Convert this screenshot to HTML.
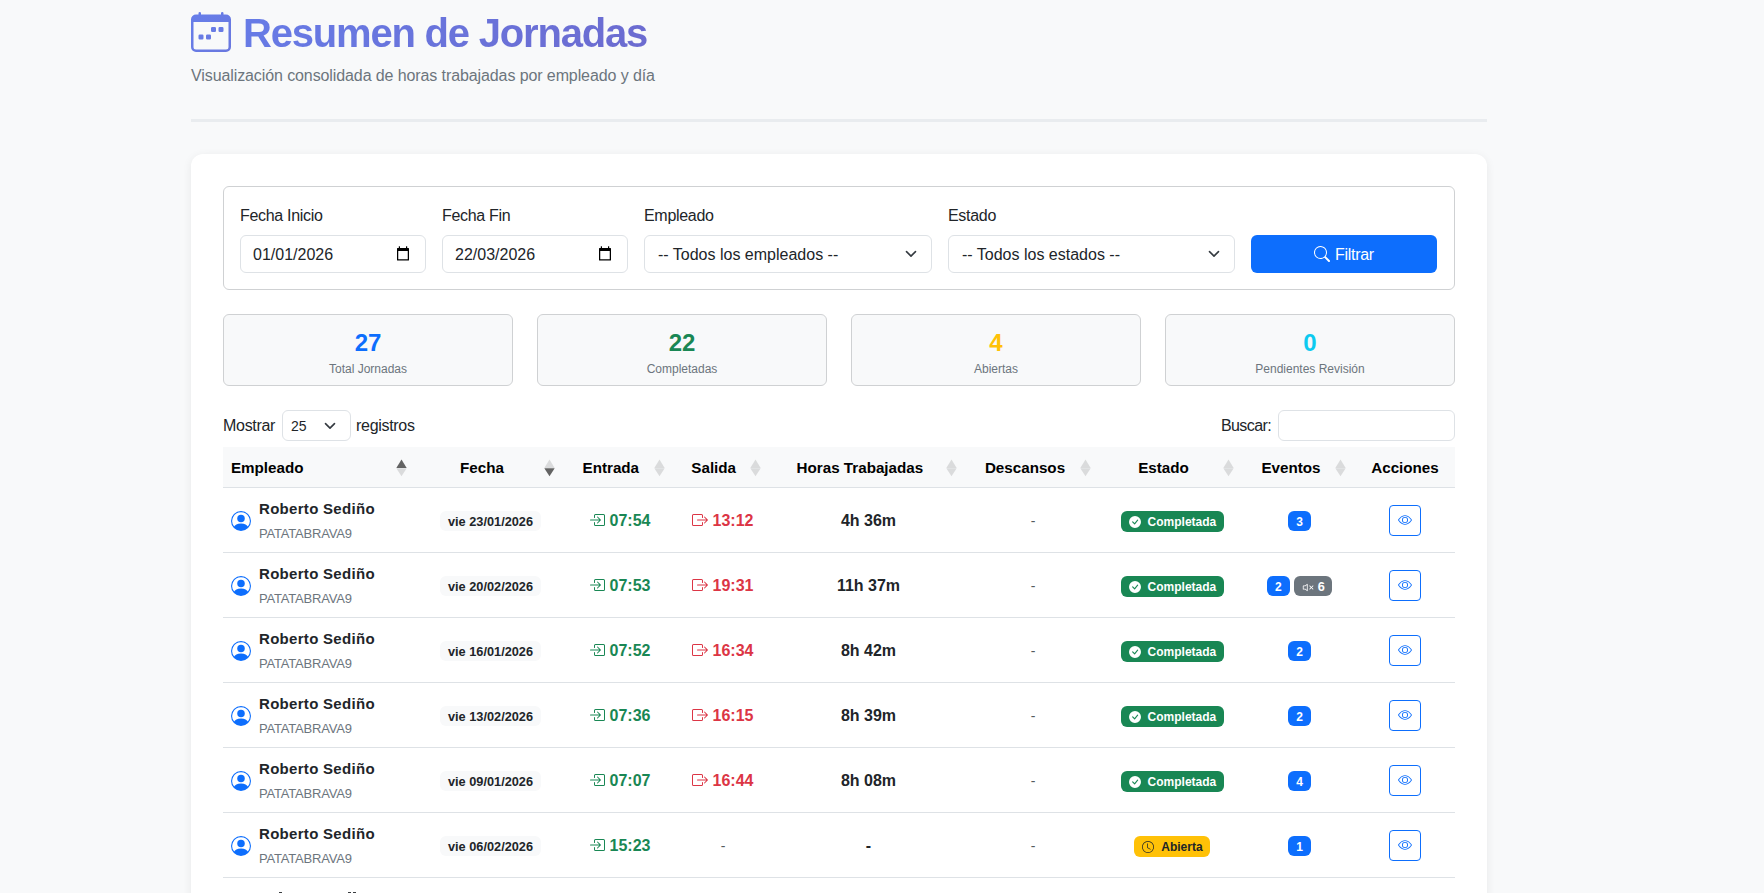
<!DOCTYPE html>
<html lang="es">
<head>
<meta charset="utf-8">
<title>Resumen de Jornadas</title>
<style>
*{box-sizing:border-box;margin:0;padding:0}
html,body{width:1764px;height:893px;overflow:hidden}
body{background:#f8f9fa;font-family:"Liberation Sans",sans-serif;color:#212529;font-size:16px;line-height:1.5;position:relative}
.abs{position:absolute}
svg{display:block}
/* header */
#hicon{left:191px;top:12px;width:40px;height:40px}
#title{left:243px;top:9px;font-size:40px;font-weight:700;line-height:48px;white-space:nowrap;letter-spacing:-1.2px;
 background:linear-gradient(135deg,#667eea 0%,#764ba2 100%);background-size:1296px 48px;background-position:-53px 0;-webkit-background-clip:text;background-clip:text;color:transparent}
#sub{left:191px;top:64px;color:#6c757d;font-size:16px;line-height:24px;white-space:nowrap;letter-spacing:-0.1px}
#hr{left:191px;top:119px;width:1296px;height:3px;background:#e9ecef}
/* card */
#card{left:191px;top:154px;width:1296px;height:800px;background:#fff;border-radius:12px;box-shadow:0 2px 10px rgba(0,0,0,.07)}
#filters{left:223px;top:186px;width:1232px;height:104px;border:1px solid #cfd1d3;border-radius:6px;background:#fff}
.lbl{font-size:16px;line-height:24px;white-space:nowrap;color:#212529;letter-spacing:-0.3px}
.inp{height:38px;border:1px solid #dee2e6;border-radius:6px;background:#fff;font-size:16px;line-height:36px;padding-top:1px;padding-left:12px;white-space:nowrap;color:#212529}
.btn{background:#0d6efd;border-radius:6px;color:#fff;height:38px}
/* stats */
.stat{top:314px;width:290px;height:72px;background:#f8f9fa;border:1px solid #cfd1d3;border-radius:6px;text-align:center}
.stat .n{position:absolute;left:0;right:0;top:10px;font-size:24px;font-weight:700;line-height:36px}
.stat .t{position:absolute;left:0;right:0;top:45px;font-size:12px;line-height:18px;color:#6c757d}
/* table */
#thead{left:223px;top:447px;width:1232px;height:41px;background:#f8f9fa;border-bottom:1px solid #dee2e6}
.th{position:absolute;top:0;height:40px;font-weight:700;font-size:15.2px;line-height:40px;white-space:nowrap;color:#000}
.row{position:absolute;left:223px;width:1232px;height:65px;border-bottom:1px solid #dee2e6}
.c{position:absolute;top:0;height:64px;display:flex;align-items:center;justify-content:center;white-space:nowrap}
.badge{display:inline-block;font-size:12px;font-weight:700;line-height:12px;padding:4px 8px;border-radius:6px;white-space:nowrap}
.nm{font-weight:700;font-size:15px;line-height:24px;white-space:nowrap;color:#212529;letter-spacing:0.3px}
.us{font-size:13px;line-height:20px;white-space:nowrap;color:#6c757d;letter-spacing:-0.2px}
.dt{background:#f8f9fa;color:#212529;font-size:12.75px;padding:4px 8px 4.4px;position:relative;top:1.3px}
.tm{display:inline-flex;align-items:center;font-weight:700;font-size:16px;line-height:24px}
.hr{font-weight:700;font-size:16px;line-height:24px;color:#212529;position:relative;top:1px}
.t1{position:relative;top:1px}
.dash{color:#555b61;font-size:14px;position:relative;top:1px}
.st{display:inline-flex;align-items:center;position:relative;top:1.4px;left:0.4px;padding:5.5px 7.8px 3.8px}
.ev{display:inline-flex;align-items:center;color:#fff;position:relative;top:1px;padding:5.2px 8.4px 3.2px}
.vbtn{display:inline-flex;align-items:center;justify-content:center;width:32px;height:31px;border:1px solid #0d6efd;border-radius:4px}
</style>
</head>
<body>
<!-- header -->
<svg id="hicon" class="abs" viewBox="0 0 16 16">
 <defs><linearGradient id="g1" x1="0" y1="0" x2="1" y2="1"><stop offset="0" stop-color="#667eea"/><stop offset="1" stop-color="#6a78df"/></linearGradient></defs>
 <g fill="url(#g1)">
 <path d="M11 6.5a.5.5 0 0 1 .5-.5h1a.5.5 0 0 1 .5.5v1a.5.5 0 0 1-.5.5h-1a.5.5 0 0 1-.5-.5zm-3 0a.5.5 0 0 1 .5-.5h1a.5.5 0 0 1 .5.5v1a.5.5 0 0 1-.5.5h-1a.5.5 0 0 1-.5-.5zm-5 3a.5.5 0 0 1 .5-.5h1a.5.5 0 0 1 .5.5v1a.5.5 0 0 1-.5.5h-1a.5.5 0 0 1-.5-.5zm3 0a.5.5 0 0 1 .5-.5h1a.5.5 0 0 1 .5.5v1a.5.5 0 0 1-.5.5h-1a.5.5 0 0 1-.5-.5z"/>
 <path d="M3.5 0a.5.5 0 0 1 .5.5V1h8V.5a.5.5 0 0 1 1 0V1h1a2 2 0 0 1 2 2v11a2 2 0 0 1-2 2H2a2 2 0 0 1-2-2V3a2 2 0 0 1 2-2h1V.5a.5.5 0 0 1 .5-.5M1 4v10a1 1 0 0 0 1 1h12a1 1 0 0 0 1-1V4z"/>
 </g>
</svg>
<div id="title" class="abs">Resumen de Jornadas</div>
<div id="sub" class="abs">Visualización consolidada de horas trabajadas por empleado y día</div>
<div id="hr" class="abs"></div>

<div id="card" class="abs"></div>
<div id="filters" class="abs"></div>

<!-- filters -->
<div class="abs lbl" style="left:240px;top:204px">Fecha Inicio</div>
<div class="abs lbl" style="left:442px;top:204px">Fecha Fin</div>
<div class="abs lbl" style="left:644px;top:204px">Empleado</div>
<div class="abs lbl" style="left:948px;top:204px">Estado</div>
<div class="abs inp" style="left:240px;top:235px;width:186px">01/01/2026</div>
<svg class="abs" style="left:396px;top:245px" width="14" height="17" viewBox="0 0 14 17"><path fill-rule="evenodd" fill="#000" d="M1.6 3H12.4A.6.6 0 0 1 13 3.6V14.9A.6.6 0 0 1 12.4 15.5H1.6A.6.6 0 0 1 1 14.9V3.6A.6.6 0 0 1 1.6 3ZM2.25 6V14.25H11.75V6Z"/><rect x="2.8" y="1.3" width="1.2" height="2" fill="#000"/><rect x="10" y="1.3" width="1.2" height="2" fill="#000"/></svg>
<div class="abs inp" style="left:442px;top:235px;width:186px">22/03/2026</div>
<svg class="abs" style="left:598px;top:245px" width="14" height="17" viewBox="0 0 14 17"><path fill-rule="evenodd" fill="#000" d="M1.6 3H12.4A.6.6 0 0 1 13 3.6V14.9A.6.6 0 0 1 12.4 15.5H1.6A.6.6 0 0 1 1 14.9V3.6A.6.6 0 0 1 1.6 3ZM2.25 6V14.25H11.75V6Z"/><rect x="2.8" y="1.3" width="1.2" height="2" fill="#000"/><rect x="10" y="1.3" width="1.2" height="2" fill="#000"/></svg>
<div class="abs inp" style="left:644px;top:235px;width:288px;padding-left:13px">-- Todos los empleados --</div>
<svg class="abs" style="left:903px;top:248px" width="16" height="12" viewBox="0 0 16 12"><path d="M3.5 3.6l4.5 4.5 4.5-4.5" fill="none" stroke="#343a40" stroke-width="1.6" stroke-linecap="round" stroke-linejoin="round"/></svg>
<div class="abs inp" style="left:948px;top:235px;width:287px;padding-left:13px">-- Todos los estados --</div>
<svg class="abs" style="left:1206px;top:248px" width="16" height="12" viewBox="0 0 16 12"><path d="M3.5 3.6l4.5 4.5 4.5-4.5" fill="none" stroke="#343a40" stroke-width="1.6" stroke-linecap="round" stroke-linejoin="round"/></svg>
<div class="abs btn" style="left:1251px;top:235px;width:186px"></div>
<svg class="abs" style="left:1314px;top:246px" width="16" height="16" viewBox="0 0 16 16" fill="#fff"><path d="M11.742 10.344a6.5 6.5 0 1 0-1.397 1.398h-.001q.044.06.098.115l3.85 3.85a1 1 0 0 0 1.415-1.414l-3.85-3.85a1 1 0 0 0-.115-.1zM12 6.5a5.5 5.5 0 1 1-11 0 5.5 5.5 0 0 1 11 0"/></svg>
<div class="abs lbl" style="left:1335px;top:243px;color:#fff">Filtrar</div>

<!-- stats -->
<div class="abs stat" style="left:223px"><div class="n" style="color:#0d6efd">27</div><div class="t">Total Jornadas</div></div>
<div class="abs stat" style="left:537px"><div class="n" style="color:#198754">22</div><div class="t">Completadas</div></div>
<div class="abs stat" style="left:851px"><div class="n" style="color:#ffc107">4</div><div class="t">Abiertas</div></div>
<div class="abs stat" style="left:1165px"><div class="n" style="color:#0dcaf0">0</div><div class="t">Pendientes Revisión</div></div>

<!-- table controls -->
<div class="abs lbl" style="left:223px;top:414px">Mostrar</div>
<div class="abs inp" style="left:282px;top:410px;width:69px;height:31px;line-height:29px;padding-left:8px;font-size:14px">25</div>
<svg class="abs" style="left:322px;top:420px" width="16" height="12" viewBox="0 0 16 12"><path d="M3.5 3.6l4.5 4.5 4.5-4.5" fill="none" stroke="#343a40" stroke-width="1.6" stroke-linecap="round" stroke-linejoin="round"/></svg>
<div class="abs lbl" style="left:356px;top:414px">registros</div>
<div class="abs lbl" style="left:1221px;top:414px;letter-spacing:-0.6px">Buscar:</div>
<div class="abs inp" style="left:1278px;top:410px;width:177px;height:31px"></div>
<!-- TABLE START -->
<div class="abs" id="thead"></div>
<div class="abs th" style="left:230.9px;top:448px">Empleado</div>
<div class="abs th" style="left:332.0px;width:300px;text-align:center;top:448px">Fecha</div>
<div class="abs th" style="left:460.8px;width:300px;text-align:center;top:448px">Entrada</div>
<div class="abs th" style="left:563.7px;width:300px;text-align:center;top:448px">Salida</div>
<div class="abs th" style="left:709.9px;width:300px;text-align:center;top:448px">Horas Trabajadas</div>
<div class="abs th" style="left:875.0px;width:300px;text-align:center;top:448px">Descansos</div>
<div class="abs th" style="left:1013.5px;width:300px;text-align:center;top:448px">Estado</div>
<div class="abs th" style="left:1141.0px;width:300px;text-align:center;top:448px">Eventos</div>
<div class="abs th" style="left:1255.0px;width:300px;text-align:center;top:448px">Acciones</div>
<svg class="abs" style="left:395.9px;top:459px" width="11" height="18" viewBox="0 0 11 18"><path d="M0.3 8.9L5.5 0.6L10.7 8.9Z" fill="#636363"/><path d="M0.3 9.3L10.7 9.3L5.5 17.2Z" fill="#dadbdc"/></svg>
<svg class="abs" style="left:544.0px;top:459px" width="11" height="18" viewBox="0 0 11 18"><path d="M0.3 8.9L5.5 0.6L10.7 8.9Z" fill="#dadbdc"/><path d="M0.3 9.3L10.7 9.3L5.5 17.2Z" fill="#636363"/></svg>
<svg class="abs" style="left:654.3px;top:459px" width="11" height="18" viewBox="0 0 11 18"><path d="M0.3 8.9L5.5 0.6L10.7 8.9Z" fill="#dadbdc"/><path d="M0.3 9.3L10.7 9.3L5.5 17.2Z" fill="#dadbdc"/></svg>
<svg class="abs" style="left:750.0px;top:459px" width="11" height="18" viewBox="0 0 11 18"><path d="M0.3 8.9L5.5 0.6L10.7 8.9Z" fill="#dadbdc"/><path d="M0.3 9.3L10.7 9.3L5.5 17.2Z" fill="#dadbdc"/></svg>
<svg class="abs" style="left:945.5px;top:459px" width="11" height="18" viewBox="0 0 11 18"><path d="M0.3 8.9L5.5 0.6L10.7 8.9Z" fill="#dadbdc"/><path d="M0.3 9.3L10.7 9.3L5.5 17.2Z" fill="#dadbdc"/></svg>
<svg class="abs" style="left:1079.9px;top:459px" width="11" height="18" viewBox="0 0 11 18"><path d="M0.3 8.9L5.5 0.6L10.7 8.9Z" fill="#dadbdc"/><path d="M0.3 9.3L10.7 9.3L5.5 17.2Z" fill="#dadbdc"/></svg>
<svg class="abs" style="left:1223.2px;top:459px" width="11" height="18" viewBox="0 0 11 18"><path d="M0.3 8.9L5.5 0.6L10.7 8.9Z" fill="#dadbdc"/><path d="M0.3 9.3L10.7 9.3L5.5 17.2Z" fill="#dadbdc"/></svg>
<svg class="abs" style="left:1334.5px;top:459px" width="11" height="18" viewBox="0 0 11 18"><path d="M0.3 8.9L5.5 0.6L10.7 8.9Z" fill="#dadbdc"/><path d="M0.3 9.3L10.7 9.3L5.5 17.2Z" fill="#dadbdc"/></svg>
<div class="row" style="top:488px"><div class="abs" style="left:7.800000000000011px;top:23px"><svg width="20" height="20" viewBox="0 0 16 16" fill="#0d6efd" style=""><path d="M11 6a3 3 0 1 1-6 0 3 3 0 0 1 6 0"/><path fill-rule="evenodd" d="M0 8a8 8 0 1 1 16 0A8 8 0 0 1 0 8m8-7a7 7 0 0 0-5.468 11.37C3.242 11.226 4.805 10 8 10s4.757 1.225 5.468 2.37A7 7 0 0 0 8 1"/></svg></div><div class="abs nm" style="left:36px;top:9px">Roberto Sediño</div><div class="abs us" style="left:36px;top:35.5px">PATATABRAVA9</div><div class="c" style="left:193px;width:149px;"><span class="badge dt"><span class="t1">vie 23/01/2026</span></span></div><div class="c" style="left:342px;width:110px;"><span class="tm" style="color:#198754"><svg width="16" height="16" viewBox="0 0 16 16" fill="#198754" style="margin-right:4px;position:relative;left:-1px"><path fill-rule="evenodd" d="M6 3.5a.5.5 0 0 1 .5-.5h8a.5.5 0 0 1 .5.5v9a.5.5 0 0 1-.5.5h-8a.5.5 0 0 1-.5-.5v-2a.5.5 0 0 0-1 0v2A1.5 1.5 0 0 0 6.5 14h8a1.5 1.5 0 0 0 1.5-1.5v-9A1.5 1.5 0 0 0 14.5 2h-8A1.5 1.5 0 0 0 5 3.5v2a.5.5 0 0 0 1 0z"/><path fill-rule="evenodd" d="M11.854 8.354a.5.5 0 0 0 0-.708l-3-3a.5.5 0 1 0-.708.708L10.293 7.5H1.5a.5.5 0 0 0 0 1h8.793l-2.147 2.146a.5.5 0 0 0 .708.708z"/></svg><span class="t1">07:54</span></span></div><div class="c" style="left:452px;width:96px;"><span class="tm" style="color:#dc3545"><svg width="16" height="16" viewBox="0 0 16 16" fill="#dc3545" style="margin-right:4px;position:relative;left:-1px"><path fill-rule="evenodd" d="M10 12.5a.5.5 0 0 1-.5.5h-8a.5.5 0 0 1-.5-.5v-9a.5.5 0 0 1 .5-.5h8a.5.5 0 0 1 .5.5v2a.5.5 0 0 0 1 0v-2A1.5 1.5 0 0 0 9.5 2h-8A1.5 1.5 0 0 0 0 3.5v9A1.5 1.5 0 0 0 1.5 14h8a1.5 1.5 0 0 0 1.5-1.5v-2a.5.5 0 0 0-1 0z"/><path fill-rule="evenodd" d="M15.854 8.354a.5.5 0 0 0 0-.708l-3-3a.5.5 0 0 0-.708.708L14.293 7.5H5.5a.5.5 0 0 0 0 1h8.793l-2.147 2.146a.5.5 0 0 0 .708.708z"/></svg><span class="t1">13:12</span></span></div><div class="c" style="left:548px;width:195px;"><span class="hr">4h 36m</span></div><div class="c" style="left:743px;width:134px;"><span class="dash">-</span></div><div class="c" style="left:877px;width:144px;"><span class="badge st" style="background:#198754;color:#fff"><svg width="12" height="12" viewBox="0 0 16 16" fill="#fff" style="margin-right:7px"><path d="M16 8A8 8 0 1 1 0 8a8 8 0 0 1 16 0m-3.97-3.03a.75.75 0 0 0-1.08.022L7.477 9.417 5.384 7.323a.75.75 0 0 0-1.06 1.06L6.97 11.03a.75.75 0 0 0 1.079-.02l3.992-4.99a.75.75 0 0 0-.01-1.05z"/></svg>Completada</span></div><div class="c" style="left:1021px;width:111px;"><span class="badge ev" style="background:#0d6efd">3</span></div><div class="c" style="left:1132px;width:100px;"><span class="vbtn"><svg width="14" height="14" viewBox="0 0 16 16" fill="#0d6efd" style=""><path d="M16 8s-3-5.5-8-5.5S0 8 0 8s3 5.5 8 5.5S16 8 16 8M1.173 8a13 13 0 0 1 1.66-2.043C4.12 4.668 5.88 3.5 8 3.5s3.879 1.168 5.168 2.457A13 13 0 0 1 14.828 8q-.086.13-.195.288c-.335.48-.83 1.12-1.465 1.755C11.879 11.332 10.119 12.5 8 12.5s-3.879-1.168-5.168-2.457A13 13 0 0 1 1.172 8z"/><path d="M8 5.5a2.5 2.5 0 1 0 0 5 2.5 2.5 0 0 0 0-5M4.5 8a3.5 3.5 0 1 1 7 0 3.5 3.5 0 0 1-7 0"/></svg></span></div></div>
<div class="row" style="top:553px"><div class="abs" style="left:7.800000000000011px;top:23px"><svg width="20" height="20" viewBox="0 0 16 16" fill="#0d6efd" style=""><path d="M11 6a3 3 0 1 1-6 0 3 3 0 0 1 6 0"/><path fill-rule="evenodd" d="M0 8a8 8 0 1 1 16 0A8 8 0 0 1 0 8m8-7a7 7 0 0 0-5.468 11.37C3.242 11.226 4.805 10 8 10s4.757 1.225 5.468 2.37A7 7 0 0 0 8 1"/></svg></div><div class="abs nm" style="left:36px;top:9px">Roberto Sediño</div><div class="abs us" style="left:36px;top:35.5px">PATATABRAVA9</div><div class="c" style="left:193px;width:149px;"><span class="badge dt"><span class="t1">vie 20/02/2026</span></span></div><div class="c" style="left:342px;width:110px;"><span class="tm" style="color:#198754"><svg width="16" height="16" viewBox="0 0 16 16" fill="#198754" style="margin-right:4px;position:relative;left:-1px"><path fill-rule="evenodd" d="M6 3.5a.5.5 0 0 1 .5-.5h8a.5.5 0 0 1 .5.5v9a.5.5 0 0 1-.5.5h-8a.5.5 0 0 1-.5-.5v-2a.5.5 0 0 0-1 0v2A1.5 1.5 0 0 0 6.5 14h8a1.5 1.5 0 0 0 1.5-1.5v-9A1.5 1.5 0 0 0 14.5 2h-8A1.5 1.5 0 0 0 5 3.5v2a.5.5 0 0 0 1 0z"/><path fill-rule="evenodd" d="M11.854 8.354a.5.5 0 0 0 0-.708l-3-3a.5.5 0 1 0-.708.708L10.293 7.5H1.5a.5.5 0 0 0 0 1h8.793l-2.147 2.146a.5.5 0 0 0 .708.708z"/></svg><span class="t1">07:53</span></span></div><div class="c" style="left:452px;width:96px;"><span class="tm" style="color:#dc3545"><svg width="16" height="16" viewBox="0 0 16 16" fill="#dc3545" style="margin-right:4px;position:relative;left:-1px"><path fill-rule="evenodd" d="M10 12.5a.5.5 0 0 1-.5.5h-8a.5.5 0 0 1-.5-.5v-9a.5.5 0 0 1 .5-.5h8a.5.5 0 0 1 .5.5v2a.5.5 0 0 0 1 0v-2A1.5 1.5 0 0 0 9.5 2h-8A1.5 1.5 0 0 0 0 3.5v9A1.5 1.5 0 0 0 1.5 14h8a1.5 1.5 0 0 0 1.5-1.5v-2a.5.5 0 0 0-1 0z"/><path fill-rule="evenodd" d="M15.854 8.354a.5.5 0 0 0 0-.708l-3-3a.5.5 0 0 0-.708.708L14.293 7.5H5.5a.5.5 0 0 0 0 1h8.793l-2.147 2.146a.5.5 0 0 0 .708.708z"/></svg><span class="t1">19:31</span></span></div><div class="c" style="left:548px;width:195px;"><span class="hr">11h 37m</span></div><div class="c" style="left:743px;width:134px;"><span class="dash">-</span></div><div class="c" style="left:877px;width:144px;"><span class="badge st" style="background:#198754;color:#fff"><svg width="12" height="12" viewBox="0 0 16 16" fill="#fff" style="margin-right:7px"><path d="M16 8A8 8 0 1 1 0 8a8 8 0 0 1 16 0m-3.97-3.03a.75.75 0 0 0-1.08.022L7.477 9.417 5.384 7.323a.75.75 0 0 0-1.06 1.06L6.97 11.03a.75.75 0 0 0 1.079-.02l3.992-4.99a.75.75 0 0 0-.01-1.05z"/></svg>Completada</span></div><div class="c" style="left:1021px;width:111px;"><span class="badge ev" style="background:#0d6efd">2</span><span class="badge ev" style="background:#6c757d;margin-left:4px;padding:5.2px 7.6px 3.2px 8px"><svg width="13" height="13" viewBox="0 0 16 16" fill="#fff" style="margin:-1px 2.6px -1px 0"><path d="M6.717 3.55A.5.5 0 0 1 7 4v8a.5.5 0 0 1-.812.39L3.825 10.5H1.5A.5.5 0 0 1 1 10V6a.5.5 0 0 1 .5-.5h2.325l2.363-1.89a.5.5 0 0 1 .529-.06M6 5.04 4.312 6.39A.5.5 0 0 1 4 6.5H2v3h2a.5.5 0 0 1 .312.11L6 10.96zm7.854.606a.5.5 0 0 1 0 .708L12.207 8l1.647 1.646a.5.5 0 0 1-.708.708L11.5 8.707l-1.646 1.647a.5.5 0 0 1-.708-.708L10.793 8 9.146 6.354a.5.5 0 1 1 .708-.708L11.5 7.293l1.646-1.647a.5.5 0 0 1 .708 0"/></svg><span style="font-size:12.75px">6</span></span></div><div class="c" style="left:1132px;width:100px;"><span class="vbtn"><svg width="14" height="14" viewBox="0 0 16 16" fill="#0d6efd" style=""><path d="M16 8s-3-5.5-8-5.5S0 8 0 8s3 5.5 8 5.5S16 8 16 8M1.173 8a13 13 0 0 1 1.66-2.043C4.12 4.668 5.88 3.5 8 3.5s3.879 1.168 5.168 2.457A13 13 0 0 1 14.828 8q-.086.13-.195.288c-.335.48-.83 1.12-1.465 1.755C11.879 11.332 10.119 12.5 8 12.5s-3.879-1.168-5.168-2.457A13 13 0 0 1 1.172 8z"/><path d="M8 5.5a2.5 2.5 0 1 0 0 5 2.5 2.5 0 0 0 0-5M4.5 8a3.5 3.5 0 1 1 7 0 3.5 3.5 0 0 1-7 0"/></svg></span></div></div>
<div class="row" style="top:618px"><div class="abs" style="left:7.800000000000011px;top:23px"><svg width="20" height="20" viewBox="0 0 16 16" fill="#0d6efd" style=""><path d="M11 6a3 3 0 1 1-6 0 3 3 0 0 1 6 0"/><path fill-rule="evenodd" d="M0 8a8 8 0 1 1 16 0A8 8 0 0 1 0 8m8-7a7 7 0 0 0-5.468 11.37C3.242 11.226 4.805 10 8 10s4.757 1.225 5.468 2.37A7 7 0 0 0 8 1"/></svg></div><div class="abs nm" style="left:36px;top:9px">Roberto Sediño</div><div class="abs us" style="left:36px;top:35.5px">PATATABRAVA9</div><div class="c" style="left:193px;width:149px;"><span class="badge dt"><span class="t1">vie 16/01/2026</span></span></div><div class="c" style="left:342px;width:110px;"><span class="tm" style="color:#198754"><svg width="16" height="16" viewBox="0 0 16 16" fill="#198754" style="margin-right:4px;position:relative;left:-1px"><path fill-rule="evenodd" d="M6 3.5a.5.5 0 0 1 .5-.5h8a.5.5 0 0 1 .5.5v9a.5.5 0 0 1-.5.5h-8a.5.5 0 0 1-.5-.5v-2a.5.5 0 0 0-1 0v2A1.5 1.5 0 0 0 6.5 14h8a1.5 1.5 0 0 0 1.5-1.5v-9A1.5 1.5 0 0 0 14.5 2h-8A1.5 1.5 0 0 0 5 3.5v2a.5.5 0 0 0 1 0z"/><path fill-rule="evenodd" d="M11.854 8.354a.5.5 0 0 0 0-.708l-3-3a.5.5 0 1 0-.708.708L10.293 7.5H1.5a.5.5 0 0 0 0 1h8.793l-2.147 2.146a.5.5 0 0 0 .708.708z"/></svg><span class="t1">07:52</span></span></div><div class="c" style="left:452px;width:96px;"><span class="tm" style="color:#dc3545"><svg width="16" height="16" viewBox="0 0 16 16" fill="#dc3545" style="margin-right:4px;position:relative;left:-1px"><path fill-rule="evenodd" d="M10 12.5a.5.5 0 0 1-.5.5h-8a.5.5 0 0 1-.5-.5v-9a.5.5 0 0 1 .5-.5h8a.5.5 0 0 1 .5.5v2a.5.5 0 0 0 1 0v-2A1.5 1.5 0 0 0 9.5 2h-8A1.5 1.5 0 0 0 0 3.5v9A1.5 1.5 0 0 0 1.5 14h8a1.5 1.5 0 0 0 1.5-1.5v-2a.5.5 0 0 0-1 0z"/><path fill-rule="evenodd" d="M15.854 8.354a.5.5 0 0 0 0-.708l-3-3a.5.5 0 0 0-.708.708L14.293 7.5H5.5a.5.5 0 0 0 0 1h8.793l-2.147 2.146a.5.5 0 0 0 .708.708z"/></svg><span class="t1">16:34</span></span></div><div class="c" style="left:548px;width:195px;"><span class="hr">8h 42m</span></div><div class="c" style="left:743px;width:134px;"><span class="dash">-</span></div><div class="c" style="left:877px;width:144px;"><span class="badge st" style="background:#198754;color:#fff"><svg width="12" height="12" viewBox="0 0 16 16" fill="#fff" style="margin-right:7px"><path d="M16 8A8 8 0 1 1 0 8a8 8 0 0 1 16 0m-3.97-3.03a.75.75 0 0 0-1.08.022L7.477 9.417 5.384 7.323a.75.75 0 0 0-1.06 1.06L6.97 11.03a.75.75 0 0 0 1.079-.02l3.992-4.99a.75.75 0 0 0-.01-1.05z"/></svg>Completada</span></div><div class="c" style="left:1021px;width:111px;"><span class="badge ev" style="background:#0d6efd">2</span></div><div class="c" style="left:1132px;width:100px;"><span class="vbtn"><svg width="14" height="14" viewBox="0 0 16 16" fill="#0d6efd" style=""><path d="M16 8s-3-5.5-8-5.5S0 8 0 8s3 5.5 8 5.5S16 8 16 8M1.173 8a13 13 0 0 1 1.66-2.043C4.12 4.668 5.88 3.5 8 3.5s3.879 1.168 5.168 2.457A13 13 0 0 1 14.828 8q-.086.13-.195.288c-.335.48-.83 1.12-1.465 1.755C11.879 11.332 10.119 12.5 8 12.5s-3.879-1.168-5.168-2.457A13 13 0 0 1 1.172 8z"/><path d="M8 5.5a2.5 2.5 0 1 0 0 5 2.5 2.5 0 0 0 0-5M4.5 8a3.5 3.5 0 1 1 7 0 3.5 3.5 0 0 1-7 0"/></svg></span></div></div>
<div class="row" style="top:683px"><div class="abs" style="left:7.800000000000011px;top:23px"><svg width="20" height="20" viewBox="0 0 16 16" fill="#0d6efd" style=""><path d="M11 6a3 3 0 1 1-6 0 3 3 0 0 1 6 0"/><path fill-rule="evenodd" d="M0 8a8 8 0 1 1 16 0A8 8 0 0 1 0 8m8-7a7 7 0 0 0-5.468 11.37C3.242 11.226 4.805 10 8 10s4.757 1.225 5.468 2.37A7 7 0 0 0 8 1"/></svg></div><div class="abs nm" style="left:36px;top:9px">Roberto Sediño</div><div class="abs us" style="left:36px;top:35.5px">PATATABRAVA9</div><div class="c" style="left:193px;width:149px;"><span class="badge dt"><span class="t1">vie 13/02/2026</span></span></div><div class="c" style="left:342px;width:110px;"><span class="tm" style="color:#198754"><svg width="16" height="16" viewBox="0 0 16 16" fill="#198754" style="margin-right:4px;position:relative;left:-1px"><path fill-rule="evenodd" d="M6 3.5a.5.5 0 0 1 .5-.5h8a.5.5 0 0 1 .5.5v9a.5.5 0 0 1-.5.5h-8a.5.5 0 0 1-.5-.5v-2a.5.5 0 0 0-1 0v2A1.5 1.5 0 0 0 6.5 14h8a1.5 1.5 0 0 0 1.5-1.5v-9A1.5 1.5 0 0 0 14.5 2h-8A1.5 1.5 0 0 0 5 3.5v2a.5.5 0 0 0 1 0z"/><path fill-rule="evenodd" d="M11.854 8.354a.5.5 0 0 0 0-.708l-3-3a.5.5 0 1 0-.708.708L10.293 7.5H1.5a.5.5 0 0 0 0 1h8.793l-2.147 2.146a.5.5 0 0 0 .708.708z"/></svg><span class="t1">07:36</span></span></div><div class="c" style="left:452px;width:96px;"><span class="tm" style="color:#dc3545"><svg width="16" height="16" viewBox="0 0 16 16" fill="#dc3545" style="margin-right:4px;position:relative;left:-1px"><path fill-rule="evenodd" d="M10 12.5a.5.5 0 0 1-.5.5h-8a.5.5 0 0 1-.5-.5v-9a.5.5 0 0 1 .5-.5h8a.5.5 0 0 1 .5.5v2a.5.5 0 0 0 1 0v-2A1.5 1.5 0 0 0 9.5 2h-8A1.5 1.5 0 0 0 0 3.5v9A1.5 1.5 0 0 0 1.5 14h8a1.5 1.5 0 0 0 1.5-1.5v-2a.5.5 0 0 0-1 0z"/><path fill-rule="evenodd" d="M15.854 8.354a.5.5 0 0 0 0-.708l-3-3a.5.5 0 0 0-.708.708L14.293 7.5H5.5a.5.5 0 0 0 0 1h8.793l-2.147 2.146a.5.5 0 0 0 .708.708z"/></svg><span class="t1">16:15</span></span></div><div class="c" style="left:548px;width:195px;"><span class="hr">8h 39m</span></div><div class="c" style="left:743px;width:134px;"><span class="dash">-</span></div><div class="c" style="left:877px;width:144px;"><span class="badge st" style="background:#198754;color:#fff"><svg width="12" height="12" viewBox="0 0 16 16" fill="#fff" style="margin-right:7px"><path d="M16 8A8 8 0 1 1 0 8a8 8 0 0 1 16 0m-3.97-3.03a.75.75 0 0 0-1.08.022L7.477 9.417 5.384 7.323a.75.75 0 0 0-1.06 1.06L6.97 11.03a.75.75 0 0 0 1.079-.02l3.992-4.99a.75.75 0 0 0-.01-1.05z"/></svg>Completada</span></div><div class="c" style="left:1021px;width:111px;"><span class="badge ev" style="background:#0d6efd">2</span></div><div class="c" style="left:1132px;width:100px;"><span class="vbtn"><svg width="14" height="14" viewBox="0 0 16 16" fill="#0d6efd" style=""><path d="M16 8s-3-5.5-8-5.5S0 8 0 8s3 5.5 8 5.5S16 8 16 8M1.173 8a13 13 0 0 1 1.66-2.043C4.12 4.668 5.88 3.5 8 3.5s3.879 1.168 5.168 2.457A13 13 0 0 1 14.828 8q-.086.13-.195.288c-.335.48-.83 1.12-1.465 1.755C11.879 11.332 10.119 12.5 8 12.5s-3.879-1.168-5.168-2.457A13 13 0 0 1 1.172 8z"/><path d="M8 5.5a2.5 2.5 0 1 0 0 5 2.5 2.5 0 0 0 0-5M4.5 8a3.5 3.5 0 1 1 7 0 3.5 3.5 0 0 1-7 0"/></svg></span></div></div>
<div class="row" style="top:748px"><div class="abs" style="left:7.800000000000011px;top:23px"><svg width="20" height="20" viewBox="0 0 16 16" fill="#0d6efd" style=""><path d="M11 6a3 3 0 1 1-6 0 3 3 0 0 1 6 0"/><path fill-rule="evenodd" d="M0 8a8 8 0 1 1 16 0A8 8 0 0 1 0 8m8-7a7 7 0 0 0-5.468 11.37C3.242 11.226 4.805 10 8 10s4.757 1.225 5.468 2.37A7 7 0 0 0 8 1"/></svg></div><div class="abs nm" style="left:36px;top:9px">Roberto Sediño</div><div class="abs us" style="left:36px;top:35.5px">PATATABRAVA9</div><div class="c" style="left:193px;width:149px;"><span class="badge dt"><span class="t1">vie 09/01/2026</span></span></div><div class="c" style="left:342px;width:110px;"><span class="tm" style="color:#198754"><svg width="16" height="16" viewBox="0 0 16 16" fill="#198754" style="margin-right:4px;position:relative;left:-1px"><path fill-rule="evenodd" d="M6 3.5a.5.5 0 0 1 .5-.5h8a.5.5 0 0 1 .5.5v9a.5.5 0 0 1-.5.5h-8a.5.5 0 0 1-.5-.5v-2a.5.5 0 0 0-1 0v2A1.5 1.5 0 0 0 6.5 14h8a1.5 1.5 0 0 0 1.5-1.5v-9A1.5 1.5 0 0 0 14.5 2h-8A1.5 1.5 0 0 0 5 3.5v2a.5.5 0 0 0 1 0z"/><path fill-rule="evenodd" d="M11.854 8.354a.5.5 0 0 0 0-.708l-3-3a.5.5 0 1 0-.708.708L10.293 7.5H1.5a.5.5 0 0 0 0 1h8.793l-2.147 2.146a.5.5 0 0 0 .708.708z"/></svg><span class="t1">07:07</span></span></div><div class="c" style="left:452px;width:96px;"><span class="tm" style="color:#dc3545"><svg width="16" height="16" viewBox="0 0 16 16" fill="#dc3545" style="margin-right:4px;position:relative;left:-1px"><path fill-rule="evenodd" d="M10 12.5a.5.5 0 0 1-.5.5h-8a.5.5 0 0 1-.5-.5v-9a.5.5 0 0 1 .5-.5h8a.5.5 0 0 1 .5.5v2a.5.5 0 0 0 1 0v-2A1.5 1.5 0 0 0 9.5 2h-8A1.5 1.5 0 0 0 0 3.5v9A1.5 1.5 0 0 0 1.5 14h8a1.5 1.5 0 0 0 1.5-1.5v-2a.5.5 0 0 0-1 0z"/><path fill-rule="evenodd" d="M15.854 8.354a.5.5 0 0 0 0-.708l-3-3a.5.5 0 0 0-.708.708L14.293 7.5H5.5a.5.5 0 0 0 0 1h8.793l-2.147 2.146a.5.5 0 0 0 .708.708z"/></svg><span class="t1">16:44</span></span></div><div class="c" style="left:548px;width:195px;"><span class="hr">8h 08m</span></div><div class="c" style="left:743px;width:134px;"><span class="dash">-</span></div><div class="c" style="left:877px;width:144px;"><span class="badge st" style="background:#198754;color:#fff"><svg width="12" height="12" viewBox="0 0 16 16" fill="#fff" style="margin-right:7px"><path d="M16 8A8 8 0 1 1 0 8a8 8 0 0 1 16 0m-3.97-3.03a.75.75 0 0 0-1.08.022L7.477 9.417 5.384 7.323a.75.75 0 0 0-1.06 1.06L6.97 11.03a.75.75 0 0 0 1.079-.02l3.992-4.99a.75.75 0 0 0-.01-1.05z"/></svg>Completada</span></div><div class="c" style="left:1021px;width:111px;"><span class="badge ev" style="background:#0d6efd">4</span></div><div class="c" style="left:1132px;width:100px;"><span class="vbtn"><svg width="14" height="14" viewBox="0 0 16 16" fill="#0d6efd" style=""><path d="M16 8s-3-5.5-8-5.5S0 8 0 8s3 5.5 8 5.5S16 8 16 8M1.173 8a13 13 0 0 1 1.66-2.043C4.12 4.668 5.88 3.5 8 3.5s3.879 1.168 5.168 2.457A13 13 0 0 1 14.828 8q-.086.13-.195.288c-.335.48-.83 1.12-1.465 1.755C11.879 11.332 10.119 12.5 8 12.5s-3.879-1.168-5.168-2.457A13 13 0 0 1 1.172 8z"/><path d="M8 5.5a2.5 2.5 0 1 0 0 5 2.5 2.5 0 0 0 0-5M4.5 8a3.5 3.5 0 1 1 7 0 3.5 3.5 0 0 1-7 0"/></svg></span></div></div>
<div class="row" style="top:813px"><div class="abs" style="left:7.800000000000011px;top:23px"><svg width="20" height="20" viewBox="0 0 16 16" fill="#0d6efd" style=""><path d="M11 6a3 3 0 1 1-6 0 3 3 0 0 1 6 0"/><path fill-rule="evenodd" d="M0 8a8 8 0 1 1 16 0A8 8 0 0 1 0 8m8-7a7 7 0 0 0-5.468 11.37C3.242 11.226 4.805 10 8 10s4.757 1.225 5.468 2.37A7 7 0 0 0 8 1"/></svg></div><div class="abs nm" style="left:36px;top:9px">Roberto Sediño</div><div class="abs us" style="left:36px;top:35.5px">PATATABRAVA9</div><div class="c" style="left:193px;width:149px;"><span class="badge dt"><span class="t1">vie 06/02/2026</span></span></div><div class="c" style="left:342px;width:110px;"><span class="tm" style="color:#198754"><svg width="16" height="16" viewBox="0 0 16 16" fill="#198754" style="margin-right:4px;position:relative;left:-1px"><path fill-rule="evenodd" d="M6 3.5a.5.5 0 0 1 .5-.5h8a.5.5 0 0 1 .5.5v9a.5.5 0 0 1-.5.5h-8a.5.5 0 0 1-.5-.5v-2a.5.5 0 0 0-1 0v2A1.5 1.5 0 0 0 6.5 14h8a1.5 1.5 0 0 0 1.5-1.5v-9A1.5 1.5 0 0 0 14.5 2h-8A1.5 1.5 0 0 0 5 3.5v2a.5.5 0 0 0 1 0z"/><path fill-rule="evenodd" d="M11.854 8.354a.5.5 0 0 0 0-.708l-3-3a.5.5 0 1 0-.708.708L10.293 7.5H1.5a.5.5 0 0 0 0 1h8.793l-2.147 2.146a.5.5 0 0 0 .708.708z"/></svg><span class="t1">15:23</span></span></div><div class="c" style="left:452px;width:96px;"><span class="dash">-</span></div><div class="c" style="left:548px;width:195px;"><span class="hr">-</span></div><div class="c" style="left:743px;width:134px;"><span class="dash">-</span></div><div class="c" style="left:877px;width:144px;"><span class="badge st" style="background:#ffc107;color:#212529"><svg width="12" height="12" viewBox="0 0 16 16" fill="#212529" style="margin-right:7px"><path d="M8 3.5a.5.5 0 0 0-1 0V9a.5.5 0 0 0 .252.434l3.5 2a.5.5 0 0 0 .496-.868L8 8.71z"/><path d="M8 16A8 8 0 1 0 8 0a8 8 0 0 0 0 16m7-8A7 7 0 1 1 1 8a7 7 0 0 1 14 0"/></svg>Abierta</span></div><div class="c" style="left:1021px;width:111px;"><span class="badge ev" style="background:#0d6efd">1</span></div><div class="c" style="left:1132px;width:100px;"><span class="vbtn"><svg width="14" height="14" viewBox="0 0 16 16" fill="#0d6efd" style=""><path d="M16 8s-3-5.5-8-5.5S0 8 0 8s3 5.5 8 5.5S16 8 16 8M1.173 8a13 13 0 0 1 1.66-2.043C4.12 4.668 5.88 3.5 8 3.5s3.879 1.168 5.168 2.457A13 13 0 0 1 14.828 8q-.086.13-.195.288c-.335.48-.83 1.12-1.465 1.755C11.879 11.332 10.119 12.5 8 12.5s-3.879-1.168-5.168-2.457A13 13 0 0 1 1.172 8z"/><path d="M8 5.5a2.5 2.5 0 1 0 0 5 2.5 2.5 0 0 0 0-5M4.5 8a3.5 3.5 0 1 1 7 0 3.5 3.5 0 0 1-7 0"/></svg></span></div></div>
<div class="row" style="top:878px"><div class="abs" style="left:7.800000000000011px;top:23px"><svg width="20" height="20" viewBox="0 0 16 16" fill="#0d6efd" style=""><path d="M11 6a3 3 0 1 1-6 0 3 3 0 0 1 6 0"/><path fill-rule="evenodd" d="M0 8a8 8 0 1 1 16 0A8 8 0 0 1 0 8m8-7a7 7 0 0 0-5.468 11.37C3.242 11.226 4.805 10 8 10s4.757 1.225 5.468 2.37A7 7 0 0 0 8 1"/></svg></div><div class="abs nm" style="left:36px;top:9px">Roberto Sediño</div><div class="abs us" style="left:36px;top:35.5px">PATATABRAVA9</div><div class="c" style="left:193px;width:149px;"><span class="badge dt"><span class="t1">vie 05/02/2026</span></span></div><div class="c" style="left:342px;width:110px;"><span class="tm" style="color:#198754"><svg width="16" height="16" viewBox="0 0 16 16" fill="#198754" style="margin-right:4px;position:relative;left:-1px"><path fill-rule="evenodd" d="M6 3.5a.5.5 0 0 1 .5-.5h8a.5.5 0 0 1 .5.5v9a.5.5 0 0 1-.5.5h-8a.5.5 0 0 1-.5-.5v-2a.5.5 0 0 0-1 0v2A1.5 1.5 0 0 0 6.5 14h8a1.5 1.5 0 0 0 1.5-1.5v-9A1.5 1.5 0 0 0 14.5 2h-8A1.5 1.5 0 0 0 5 3.5v2a.5.5 0 0 0 1 0z"/><path fill-rule="evenodd" d="M11.854 8.354a.5.5 0 0 0 0-.708l-3-3a.5.5 0 1 0-.708.708L10.293 7.5H1.5a.5.5 0 0 0 0 1h8.793l-2.147 2.146a.5.5 0 0 0 .708.708z"/></svg><span class="t1">07:40</span></span></div><div class="c" style="left:452px;width:96px;"><span class="tm" style="color:#dc3545"><svg width="16" height="16" viewBox="0 0 16 16" fill="#dc3545" style="margin-right:4px;position:relative;left:-1px"><path fill-rule="evenodd" d="M10 12.5a.5.5 0 0 1-.5.5h-8a.5.5 0 0 1-.5-.5v-9a.5.5 0 0 1 .5-.5h8a.5.5 0 0 1 .5.5v2a.5.5 0 0 0 1 0v-2A1.5 1.5 0 0 0 9.5 2h-8A1.5 1.5 0 0 0 0 3.5v9A1.5 1.5 0 0 0 1.5 14h8a1.5 1.5 0 0 0 1.5-1.5v-2a.5.5 0 0 0-1 0z"/><path fill-rule="evenodd" d="M15.854 8.354a.5.5 0 0 0 0-.708l-3-3a.5.5 0 0 0-.708.708L14.293 7.5H5.5a.5.5 0 0 0 0 1h8.793l-2.147 2.146a.5.5 0 0 0 .708.708z"/></svg><span class="t1">16:20</span></span></div><div class="c" style="left:548px;width:195px;"><span class="hr">8h 40m</span></div><div class="c" style="left:743px;width:134px;"><span class="dash">-</span></div><div class="c" style="left:877px;width:144px;"><span class="badge st" style="background:#198754;color:#fff"><svg width="12" height="12" viewBox="0 0 16 16" fill="#fff" style="margin-right:7px"><path d="M16 8A8 8 0 1 1 0 8a8 8 0 0 1 16 0m-3.97-3.03a.75.75 0 0 0-1.08.022L7.477 9.417 5.384 7.323a.75.75 0 0 0-1.06 1.06L6.97 11.03a.75.75 0 0 0 1.079-.02l3.992-4.99a.75.75 0 0 0-.01-1.05z"/></svg>Completada</span></div><div class="c" style="left:1021px;width:111px;"><span class="badge ev" style="background:#0d6efd">2</span></div><div class="c" style="left:1132px;width:100px;"><span class="vbtn"><svg width="14" height="14" viewBox="0 0 16 16" fill="#0d6efd" style=""><path d="M16 8s-3-5.5-8-5.5S0 8 0 8s3 5.5 8 5.5S16 8 16 8M1.173 8a13 13 0 0 1 1.66-2.043C4.12 4.668 5.88 3.5 8 3.5s3.879 1.168 5.168 2.457A13 13 0 0 1 14.828 8q-.086.13-.195.288c-.335.48-.83 1.12-1.465 1.755C11.879 11.332 10.119 12.5 8 12.5s-3.879-1.168-5.168-2.457A13 13 0 0 1 1.172 8z"/><path d="M8 5.5a2.5 2.5 0 1 0 0 5 2.5 2.5 0 0 0 0-5M4.5 8a3.5 3.5 0 1 1 7 0 3.5 3.5 0 0 1-7 0"/></svg></span></div></div>
<!-- TABLE END -->
<div class="abs" style="left:279px;top:892px;width:3px;height:1px;background:#3a3d40"></div>
<div class="abs" style="left:348px;top:892px;width:3px;height:1px;background:#3a3d40"></div>
<div class="abs" style="left:353px;top:892px;width:3px;height:1px;background:#3a3d40"></div>
</body>
</html>
